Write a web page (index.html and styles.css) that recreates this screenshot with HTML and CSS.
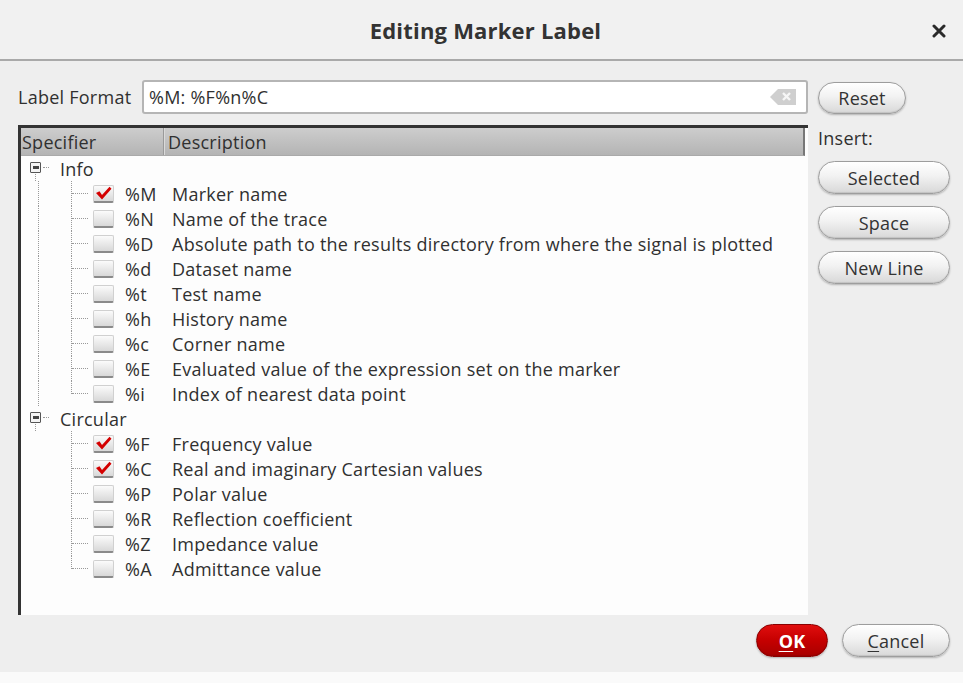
FILE: index.html
```html
<!DOCTYPE html>
<html>
<head>
<meta charset="utf-8">
<title>Editing Marker Label</title>
<link rel="stylesheet" href="styles.css">
</head>
<body>
<div class="dialog">
  <div class="titlebar">
    <span></span>
    <h1 class="title">Editing Marker Label</h1>
    <span class="close"><svg width="14" height="14" viewBox="0 0 14 14"><path d="M2 2L12 12M12 2L2 12" stroke="#2a2a2a" stroke-width="3" stroke-linecap="round"/></svg></span>
  </div>
  <div class="content">
    <div class="main">
      <div class="format-row">
        <label class="format-label">Label Format</label>
        <div class="input">
          <span class="input-text">%M: %F%n%C</span>
          <svg class="clear" width="28" height="18" viewBox="0 0 28 18"><path d="M1 9L9 1H27V17H9Z" fill="#cfcfcf"/><path d="M14 5L21 12M21 5L14 12" stroke="#f6f6f6" stroke-width="2.4"/></svg>
        </div>
      </div>
      <div class="list">
        <div class="header">
          <div class="hcol spec-h">Specifier</div>
          <div class="hcol desc-h">Description</div>
        </div>
        <div class="rows">
          <div class="row group"><span class="gbranch"><span class="box"></span><i class="gh"></i></span><span class="gname">Info</span></div>
          <div class="row child cont"><span class="branch"><i class="v0"></i><i class="v1"></i><i class="h1"></i></span><span class="cb on"><svg width="17" height="14" viewBox="0 0 17 14"><path d="M1 7L4.5 5.2L7 9L14.5 0.8L16.5 2.8L7 13.5Z" fill="#d40000"/></svg></span><span class="spec">%M</span><span class="desc">Marker name</span></div>
          <div class="row child cont"><span class="branch"><i class="v0"></i><i class="v1"></i><i class="h1"></i></span><span class="cb"></span><span class="spec">%N</span><span class="desc">Name of the trace</span></div>
          <div class="row child cont"><span class="branch"><i class="v0"></i><i class="v1"></i><i class="h1"></i></span><span class="cb"></span><span class="spec">%D</span><span class="desc">Absolute path to the results directory from where the signal is plotted</span></div>
          <div class="row child cont"><span class="branch"><i class="v0"></i><i class="v1"></i><i class="h1"></i></span><span class="cb"></span><span class="spec">%d</span><span class="desc">Dataset name</span></div>
          <div class="row child cont"><span class="branch"><i class="v0"></i><i class="v1"></i><i class="h1"></i></span><span class="cb"></span><span class="spec">%t</span><span class="desc">Test name</span></div>
          <div class="row child cont"><span class="branch"><i class="v0"></i><i class="v1"></i><i class="h1"></i></span><span class="cb"></span><span class="spec">%h</span><span class="desc">History name</span></div>
          <div class="row child cont"><span class="branch"><i class="v0"></i><i class="v1"></i><i class="h1"></i></span><span class="cb"></span><span class="spec">%c</span><span class="desc">Corner name</span></div>
          <div class="row child cont"><span class="branch"><i class="v0"></i><i class="v1"></i><i class="h1"></i></span><span class="cb"></span><span class="spec">%E</span><span class="desc">Evaluated value of the expression set on the marker</span></div>
          <div class="row child cont last"><span class="branch"><i class="v0"></i><i class="v1"></i><i class="h1"></i></span><span class="cb"></span><span class="spec">%i</span><span class="desc">Index of nearest data point</span></div>
          <div class="row group"><span class="gbranch"><span class="box"></span><i class="gh"></i></span><span class="gname">Circular</span></div>
          <div class="row child"><span class="branch"><i class="v1"></i><i class="h1"></i></span><span class="cb on"><svg width="17" height="14" viewBox="0 0 17 14"><path d="M1 7L4.5 5.2L7 9L14.5 0.8L16.5 2.8L7 13.5Z" fill="#d40000"/></svg></span><span class="spec">%F</span><span class="desc">Frequency value</span></div>
          <div class="row child"><span class="branch"><i class="v1"></i><i class="h1"></i></span><span class="cb on"><svg width="17" height="14" viewBox="0 0 17 14"><path d="M1 7L4.5 5.2L7 9L14.5 0.8L16.5 2.8L7 13.5Z" fill="#d40000"/></svg></span><span class="spec">%C</span><span class="desc">Real and imaginary Cartesian values</span></div>
          <div class="row child"><span class="branch"><i class="v1"></i><i class="h1"></i></span><span class="cb"></span><span class="spec">%P</span><span class="desc">Polar value</span></div>
          <div class="row child"><span class="branch"><i class="v1"></i><i class="h1"></i></span><span class="cb"></span><span class="spec">%R</span><span class="desc">Reflection coefficient</span></div>
          <div class="row child"><span class="branch"><i class="v1"></i><i class="h1"></i></span><span class="cb"></span><span class="spec">%Z</span><span class="desc">Impedance value</span></div>
          <div class="row child last"><span class="branch"><i class="v1"></i><i class="h1"></i></span><span class="cb"></span><span class="spec">%A</span><span class="desc">Admittance value</span></div>
        </div>
      </div>
    </div>
    <div class="side">
      <button class="btn reset">Reset</button>
      <div class="insert-label">Insert:</div>
      <button class="btn wide">Selected</button>
      <button class="btn wide">Space</button>
      <button class="btn wide">New Line</button>
    </div>
  </div>
  <div class="footer">
    <button class="btn ok"><u>O</u>K</button>
    <button class="btn cancel"><u>C</u>ancel</button>
  </div>
</div>
</body>
</html>
```
FILE: styles.css
```css
html { background: #fafafa; }
body {
  margin: 0;
  font-family: "Open Sans", "Noto Sans", sans-serif;
  font-size: 18px;
  letter-spacing: 0.25px;
  color: #303030;
}
.dialog {
  height: 672px;
  background: #eeeeee;
  display: flex;
  flex-direction: column;
}
.titlebar {
  height: 59px;
  border-bottom: 2px solid #a9a9a9;
  background: #f1f1f1;
  display: grid;
  grid-template-columns: 1fr auto 1fr;
  align-items: center;
}
.title {
  margin: 0;
  font-size: 22px;
  font-weight: 700;
  letter-spacing: 0.2px;
  color: #333;
  padding-left: 8px;
}
.close {
  justify-self: end;
  margin-right: 17px;
  display: flex;
  margin-top: 2px;
}
.content {
  display: flex;
  gap: 10px;
  padding: 19px 13px 0 18px;
}
.main {
  width: 790px;
  display: flex;
  flex-direction: column;
  gap: 11px;
}
.format-row {
  display: flex;
  align-items: center;
  gap: 10px;
  height: 34px;
}
.format-label { width: 114px; white-space: nowrap; }
.input {
  flex: 1;
  height: 34px;
  box-sizing: border-box;
  border: 2px solid #b5b5b5;
  border-radius: 3px;
  background: #fff;
  display: flex;
  align-items: center;
  justify-content: space-between;
  padding: 0 9px 0 5px;
}
.clear { display: block; }
.list {
  height: 487px;
  background: #fdfdfd;
  border-top: 3px solid #333;
  border-left: 3px solid #333;
  display: flex;
  flex-direction: column;
}
.header {
  height: 28px;
  display: flex;
  margin-right: 3px;
  background: linear-gradient(#cdcdcd, #b4b4b4);
  border-right: 2px solid #777;
  border-bottom: 1px solid #aaa;
  box-sizing: border-box;
}
.hcol {
  display: flex;
  align-items: center;
  line-height: 1;
}
.spec-h {
  width: 141px;
  padding-left: 1px;
  border-right: 1px solid #9a9a9a;
  box-shadow: 1px 0 0 #dadada;
}
.desc-h { padding-left: 4px; }
.rows { display: flex; flex-direction: column; }
.row {
  height: 25px;
  display: flex;
  align-items: center;
  white-space: nowrap;
}
.gbranch {
  width: 39px;
  height: 25px;
  position: relative;
  flex: none;
}
.box {
  position: absolute;
  left: 9px;
  top: 6px;
  width: 9px;
  height: 9px;
  border: 1.5px solid #555;
  border-radius: 1px;
  background: #f4f4f4;
}
.box::after {
  content: "";
  position: absolute;
  left: 1.5px;
  top: 3px;
  width: 6px;
  height: 3px;
  background: #444;
}
.gh {
  position: absolute;
  left: 22px;
  top: 11px;
  width: 6px;
  border-top: 1px dotted #999;
}
.group .gbranch::after {
  content: "";
  position: absolute;
  left: 14px;
  top: 18px;
  height: 7px;
  border-left: 1px dotted #999;
}
.group:last-of-type .gbranch::after { display: none; }
.branch {
  width: 72px;
  height: 25px;
  position: relative;
  flex: none;
}
.v0 {
  position: absolute;
  left: 17px;
  top: 0;
  bottom: 0;
  border-left: 1px dotted #999;
}
.v1 {
  position: absolute;
  left: 50px;
  top: 0;
  bottom: 0;
  border-left: 1px dotted #999;
}
.last .v1 { bottom: 12px; }
.h1 {
  position: absolute;
  left: 51px;
  top: 12px;
  width: 16px;
  border-top: 1px dotted #999;
}
.cb {
  width: 19px;
  height: 15px;
  flex: none;
  border: 1px solid #d0d0d0;
  border-bottom: 2px solid #8a8a8a;
  border-radius: 2px;
  background: linear-gradient(#fbfbfb, #d8d8d8);
  display: flex;
  align-items: center;
  justify-content: center;
  margin-right: 11px;
}
.cb svg { display: block; margin-top: -1px; }
.spec { width: 47px; flex: none; }
.side {
  width: 132px;
  display: flex;
  flex-direction: column;
  padding-top: 2px;
}
.btn {
  font-family: inherit;
  font-size: 18px;
  letter-spacing: 0.2px;
  color: #333;
  height: 33px;
  border: 1px solid #9d9d9d;
  border-radius: 17px;
  background: linear-gradient(#ffffff 0%, #f2f2f2 45%, #d8d8d8 100%);
  box-shadow: 0 1px 2px rgba(0,0,0,0.25), inset 0 -1px 1px rgba(0,0,0,0.1);
  padding: 0;
  line-height: 1;
}
.reset { width: 88px; height: 32px; }
.insert-label { margin-top: 13px; height: 23px; line-height: 23px; }
.wide { width: 132px; margin-top: 11px; }
.wide + .wide { margin-top: 12px; }
.footer {
  margin-top: auto;
  display: flex;
  justify-content: flex-end;
  gap: 14px;
  padding: 0 13px 15px 0;
}
.ok {
  width: 72px;
  background: linear-gradient(#e00e0e 0%, #c50000 50%, #a80000 100%);
  border-color: #8a0000;
  color: #fff;
  font-weight: 700;
}
.ok u, .cancel u { text-underline-offset: 3px; }
.cancel { width: 108px; }
```
